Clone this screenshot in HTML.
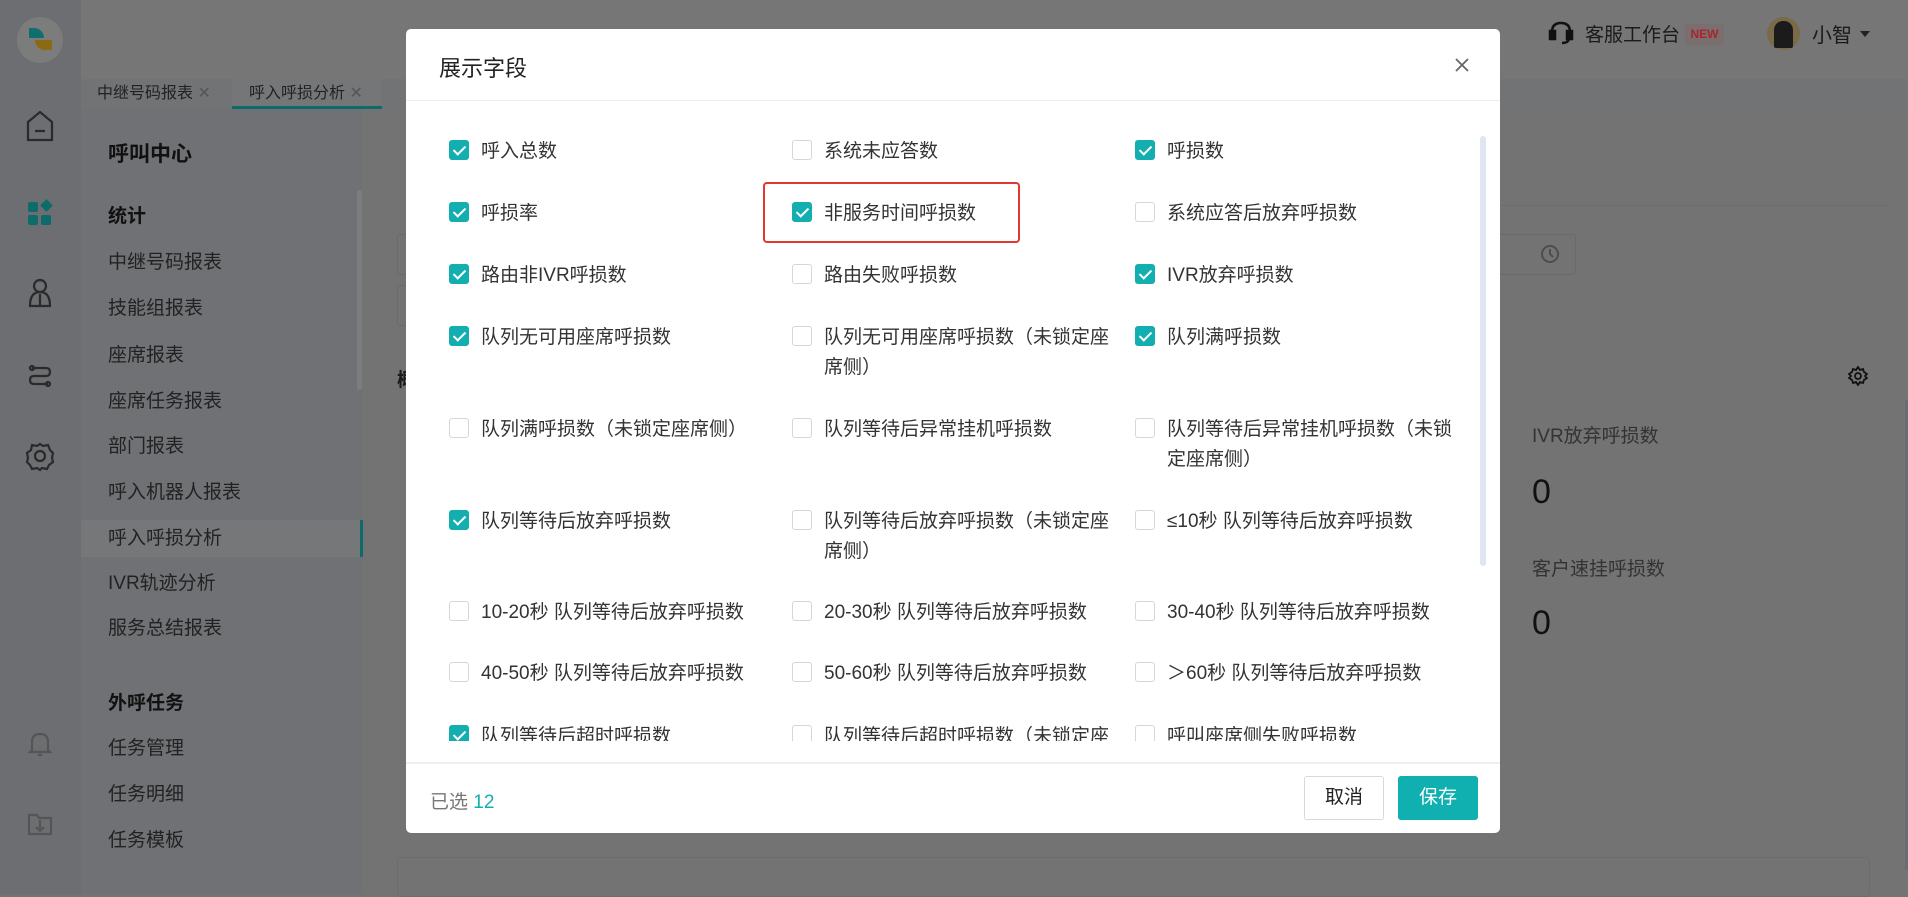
<!DOCTYPE html>
<html><head><meta charset="utf-8"><style>
*{box-sizing:border-box;margin:0;padding:0}
body{width:1908px;height:894px;overflow:hidden;position:relative;background:#737373;font-family:"Liberation Sans","Noto Sans CJK SC",sans-serif;color:#222}
.abs{position:absolute}
.lb{left:0;top:0;width:81px;height:894px;background:#6c6e71}
.top{left:81px;top:0;width:1827px;height:79px;background:#767676}
.tabs{left:81px;top:79px;width:1827px;height:30px;background:#727374}
.side{left:81px;top:109px;width:282px;height:785px;background:#707174}
.ov{position:absolute;font-size:19px;color:#222}
.modal{left:406px;top:29px;width:1094px;height:804px;background:#fff;border-radius:5px;overflow:hidden}
.clip{position:absolute;left:0;top:72px;width:1094px;height:640px;overflow:hidden}
.it{position:absolute;font-size:19px;line-height:30px;color:#333;width:292px}
.cb{position:absolute;width:20px;height:20px;border:1px solid #d6d6d6;border-radius:3px;background:#fff}
.cb.on{background:#13aeb0;border-color:#13aeb0}
.cb.on:after{content:"";position:absolute;left:6px;top:2px;width:5px;height:10px;border:solid #fff;border-width:0 2px 2px 0;transform:rotate(45deg)}
</style></head><body>
<div class="abs lb"></div>
<div class="abs" style="left:17px;top:17px;width:46px;height:46px;border-radius:50%;background:#7c7c7c"></div>
<div class="abs" style="left:29px;top:28px;width:15px;height:10px;background:#0f6e6e;border-radius:0 10px 0 0"></div>
<div class="abs" style="left:35px;top:40px;width:17px;height:10px;background:#8a6a12;border-radius:0 0 0 10px"></div>
<div class="abs top"></div>
<div class="abs tabs"></div>
<div class="abs" style="left:232px;top:79px;width:150px;height:30px;background:#757677;border-bottom:3px solid #0e6b6b"></div>
<div class="abs" style="left:97px;top:80px;font-size:16px;line-height:28px;color:#222">中继号码报表 <span style="color:#555">✕</span></div>
<div class="abs" style="left:249px;top:80px;font-size:16px;line-height:28px;color:#222">呼入呼损分析 <span style="color:#555">✕</span></div>
<div class="abs side"></div>
<div class="abs" style="left:81px;top:520px;width:282px;height:37px;background:#767778;border-right:3px solid #0e6b6b"></div>
<div class="abs" style="left:357px;top:190px;width:5px;height:200px;background:#7c7d80;border-radius:3px"></div>
<div class="ov" style="left:108px;top:138px;font-size:21px;font-weight:bold;color:#111">呼叫中心</div>
<div class="ov" style="left:108px;top:201px;font-weight:bold;color:#111">统计</div>
<div class="ov" style="left:108px;top:247px">中继号码报表</div>
<div class="ov" style="left:108px;top:293px">技能组报表</div>
<div class="ov" style="left:108px;top:340px">座席报表</div>
<div class="ov" style="left:108px;top:386px">座席任务报表</div>
<div class="ov" style="left:108px;top:431px">部门报表</div>
<div class="ov" style="left:108px;top:477px">呼入机器人报表</div>
<div class="ov" style="left:108px;top:523px">呼入呼损分析</div>
<div class="ov" style="left:108px;top:568px">IVR轨迹分析</div>
<div class="ov" style="left:108px;top:613px">服务总结报表</div>
<div class="ov" style="left:108px;top:688px;font-weight:bold;color:#111">外呼任务</div>
<div class="ov" style="left:108px;top:733px">任务管理</div>
<div class="ov" style="left:108px;top:779px">任务明细</div>
<div class="ov" style="left:108px;top:825px">任务模板</div>
<svg class="abs" style="left:0;top:0" width="81" height="894" fill="none" stroke="#2a2a2a" stroke-width="2.2">
<path d="M28 122 L40 112 L52 122 V140 H28 Z M35 131 H45"/>
<rect x="28" y="202" width="10" height="10" fill="#0e6b6b" stroke="none" rx="2"/><rect x="28" y="215" width="10" height="10" fill="#0e6b6b" stroke="none" rx="2"/><rect x="41" y="215" width="10" height="10" fill="#0e6b6b" stroke="none" rx="2"/><rect x="42" y="201" width="9" height="9" fill="#0e6b6b" stroke="none" transform="rotate(45 46.5 205.5)"/>
<circle cx="40" cy="286" r="6"/><path d="M30 306 Q30 292 40 292 Q50 292 50 306 Z M40 294 V306"/>
<path d="M32 368 H46 Q50 368 50 372 Q50 376 46 376 H34 Q30 376 30 380 Q30 384 34 384 H48"/><circle cx="32" cy="368" r="2"/><circle cx="48" cy="384" r="2"/>
<circle cx="40" cy="456" r="5"/><path d="M40 444 L43 446 L48 445 L50 450 L53 453 L52 458 L53 462 L49 465 L47 469 L42 468 L40 470 L37 468 L32 469 L30 465 L27 462 L28 458 L27 453 L31 450 L32 445 L37 446 Z"/>
<path d="M32 750 V742 Q32 734 40 734 Q48 734 48 742 V750 L50 752 H30 Z M38 755 H42" stroke="#555"/>
<path d="M29 815 H37 L39 818 H51 V834 H29 Z M40 820 V830 M36 827 L40 831 L44 827" stroke="#555"/>
</svg>
<svg class="abs" style="left:1548px;top:20px" width="26" height="26" fill="none" stroke="#111" stroke-width="2.5"><path d="M4 15 V12 Q4 3 13 3 Q22 3 22 12 V15"/><rect x="2" y="11" width="5" height="8" fill="#111"/><rect x="19" y="11" width="5" height="8" fill="#111"/><path d="M21 19 Q20 23 14 23"/></svg>
<div class="abs" style="left:1585px;top:20px;font-size:19px;color:#1a1a1a">客服工作台</div>
<div class="abs" style="left:1685px;top:24px;width:39px;height:21px;background:#7b6e6e;color:#a8262a;font-size:12px;font-weight:bold;line-height:21px;text-align:center">NEW</div>
<div class="abs" style="left:1767px;top:17px;width:33px;height:33px;border-radius:50%;background:#7a6a48"></div>
<div class="abs" style="left:1774px;top:21px;width:19px;height:27px;border-radius:9px 9px 2px 2px;background:#1b1b1b"></div>
<div class="abs" style="left:1812px;top:19px;font-size:20px;color:#1a1a1a">小智</div>
<div class="abs" style="left:1860px;top:31px;border:5px solid transparent;border-top:6px solid #222"></div>
<div class="abs" style="left:397px;top:234px;width:1179px;height:41px;border:1px solid #6a6a6a;border-radius:3px"></div>
<div class="abs" style="left:397px;top:285px;width:20px;height:41px;border:1px solid #6a6a6a;border-radius:3px"></div>
<div class="abs" style="left:1500px;top:205px;width:390px;height:1px;background:#6c6c6c"></div>
<svg class="abs" style="left:1540px;top:244px" width="20" height="20" fill="none" stroke="#4a4a4a" stroke-width="1.8"><circle cx="10" cy="10" r="8"/><path d="M10 5 V10 L13 13"/></svg>
<div class="abs" style="left:397px;top:365px;font-size:19px;font-weight:bold;color:#1a1a1a">概</div>
<svg class="abs" style="left:1848px;top:366px" width="20" height="20" fill="none" stroke="#111" stroke-width="1.8"><circle cx="10" cy="10" r="3"/><path d="M10 1 L12 4 L15 3 L16 6 L19 8 L17 10 L19 12 L16 14 L15 17 L12 16 L10 19 L8 16 L5 17 L4 14 L1 12 L3 10 L1 8 L4 6 L5 3 L8 4 Z"/></svg>
<div class="abs" style="left:1532px;top:421px;font-size:19px;color:#333">IVR放弃呼损数</div>
<div class="abs" style="left:1532px;top:473px;font-size:34px;color:#111">0</div>
<div class="abs" style="left:1532px;top:554px;font-size:19px;color:#333">客户速挂呼损数</div>
<div class="abs" style="left:1532px;top:604px;font-size:34px;color:#111">0</div>
<div class="abs" style="left:1905px;top:400px;width:3px;height:470px;background:#6a6c70"></div>
<div class="abs" style="left:397px;top:857px;width:1473px;height:40px;border:1px solid #6c6c6c;border-radius:4px"></div>

<div class="abs modal">
<div class="abs" style="left:33px;top:22px;font-size:22px;color:#222">展示字段</div>
<svg class="abs" style="left:1048px;top:28px" width="16" height="16" stroke="#666" stroke-width="1.8"><path d="M2 2 L14 14 M14 2 L2 14"/></svg>
<div class="abs" style="left:0;top:71px;width:1094px;height:1px;background:#eee"></div>
<div class="abs" style="left:1074px;top:107px;width:6px;height:430px;background:#dfe6f0;border-radius:3px"></div>
<div class="clip">
<div class="abs" style="left:357px;top:81px;width:257px;height:61px;border:2px solid #e2372f;border-radius:4px"></div>
<div id="g"></div>
</div>
<div class="abs" style="left:0;top:733px;width:1094px;height:2px;background:#eee"></div>
<div class="abs" style="left:24px;top:758px;font-size:19px;color:#777">已选 <span style="color:#13aeb0">12</span></div>
<div class="abs" style="left:898px;top:747px;width:80px;height:44px;border:1px solid #d9d9d9;border-radius:3px;font-size:19px;line-height:42px;text-align:center;color:#222">取消</div>
<div class="abs" style="left:992px;top:747px;width:80px;height:44px;background:#10b0b0;border-radius:3px;font-size:19px;line-height:44px;text-align:center;color:#fff">保存</div>
</div>
<script>
var rows=[[150,[["呼入总数",1],["系统未应答数",0],["呼损数",1]]],
[212,[["呼损率",1],["非服务时间呼损数",1],["系统应答后放弃呼损数",0]]],
[274,[["路由非IVR呼损数",1],["路由失败呼损数",0],["IVR放弃呼损数",1]]],
[336,[["队列无可用座席呼损数",1],["队列无可用座席呼损数（未锁定座席侧）",0],["队列满呼损数",1]]],
[428,[["队列满呼损数（未锁定座席侧）",0],["队列等待后异常挂机呼损数",0],["队列等待后异常挂机呼损数（未锁定座席侧）",0]]],
[520,[["队列等待后放弃呼损数",1],["队列等待后放弃呼损数（未锁定座席侧）",0],["≤10秒 队列等待后放弃呼损数",0]]],
[611,[["10-20秒 队列等待后放弃呼损数",0],["20-30秒 队列等待后放弃呼损数",0],["30-40秒 队列等待后放弃呼损数",0]]],
[672,[["40-50秒 队列等待后放弃呼损数",0],["50-60秒 队列等待后放弃呼损数",0],["＞60秒 队列等待后放弃呼损数",0]]],
[735,[["队列等待后超时呼损数",1],["队列等待后超时呼损数（未锁定座席侧）",0],["呼叫座席侧失败呼损数",0]]]];
var cx=[459,802,1145],tx=[481,824,1167],h="";
rows.forEach(function(r){var y=r[0]-101;r[1].forEach(function(c,i){
h+='<div class="cb'+(c[1]?' on':'')+'" style="left:'+(cx[i]-406-10)+'px;top:'+(y-10)+'px"></div>';
h+='<div class="it" style="left:'+(tx[i]-406)+'px;top:'+(y-13)+'px">'+c[0]+'</div>';});});
document.getElementById("g").innerHTML=h;
</script>
</body></html>
